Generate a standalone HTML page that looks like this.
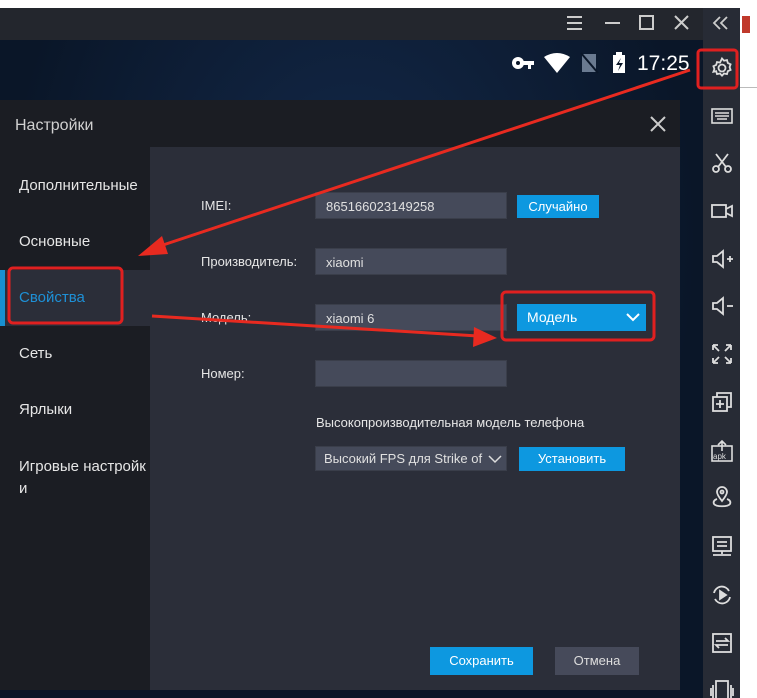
<!DOCTYPE html><html><head><meta charset="utf-8"><style>
*{margin:0;padding:0;box-sizing:border-box}
html,body{width:757px;height:698px;overflow:hidden;background:#fff;font-family:"Liberation Sans","DejaVu Sans",sans-serif;position:relative}
.a{position:absolute}
.t{color:#e6e6e6;font-size:14px}
.in{position:absolute;background:#454a5a;border:1px solid #3a3e4a;color:#e0e0e0;font-size:13px;padding:6px 10px;height:27px}
.btn{position:absolute;background:#0d98e0;color:#fff;font-size:13px;text-align:center;line-height:26px;height:26px}
.ic{position:absolute;left:710px;width:24px;height:24px}
</style></head><body>
<div class="a" style="left:0;top:8px;width:740px;height:690px;background:#0d1a2e"></div>
<div class="a" style="left:0;top:8px;width:703px;height:32px;background:#23262d"></div>
<div class="a" style="left:0;top:40px;width:703px;height:658px;background:radial-gradient(ellipse at 50% 30%,#13294a,#0a1628 70%)"></div>
<div class="a" style="left:703px;top:8px;width:37px;height:690px;background:#272b35"></div>
<div class="a" style="left:740px;top:87px;width:17px;height:1px;background:#bbb"></div>
<div class="a" style="left:742px;top:16px;width:8px;height:17px;background:#c0392b"></div>
<svg class="a" style="left:560px;top:12px" width="140" height="24" fill="none" stroke="#ccc" stroke-width="2">
<path d="M7 5h15M7 11h15M7 17h15"/><path d="M45 11h15"/><rect x="80" y="4" width="13" height="13"/><path d="M115 4l13 13M128 4l-13 13"/></svg>
<svg class="a" style="left:711px;top:14px" width="20" height="20" fill="none" stroke="#ccc" stroke-width="1.8"><path d="M9 3L3 9l6 6M16 3l-6 6 6 6"/></svg>
<svg class="a" style="left:510px;top:50px" width="180" height="26">
<circle cx="8" cy="13" r="6" fill="#fff"/><circle cx="8" cy="13" r="2" fill="#0a1628"/><rect x="12" y="11" width="12" height="4" fill="#fff"/><rect x="18" y="11" width="3" height="8" fill="#fff"/>
<path d="M34 7 Q47 -1 60 7 L47 23 Z" fill="#fff"/>
<path d="M72 4 L86 4 L86 22 L72 22 Z" fill="#6a7a90"/><line x1="71" y1="3" x2="88" y2="23" stroke="#0a1628" stroke-width="2"/>
<rect x="103" y="5" width="12" height="18" fill="#fff"/><rect x="106" y="2" width="6" height="3" fill="#fff"/><path d="M111 8 L106 15 L110 15 L108 21 L113 13 L109 13Z" fill="#0a1628"/>
<text x="127" y="20" fill="#fff" font-size="21" font-family="Liberation Sans">17:25</text></svg>
<svg class="ic" style="top:56px" viewBox="0 0 24 24" fill="none" stroke="#ddd" stroke-width="1.8"><circle cx="12" cy="12" r="3.5"/><path d="M12 2.5l2 2.2 3-.6.8 2.9 2.8 1.3-1 2.8 1 2.8-2.8 1.3-.8 2.9-3-.6-2 2.2-2-2.2-3 .6-.8-2.9L3.4 15.8l1-2.8-1-2.8 2.8-1.3.8-2.9 3 .6z"/></svg>
<svg class="ic" style="top:104px" viewBox="0 0 24 24" fill="none" stroke="#ddd" stroke-width="1.6"><rect x="2" y="5" width="20" height="14"/><path d="M5 9h14M5 12h14M7 15h10"/></svg>
<svg class="ic" style="top:151px" viewBox="0 0 24 24" fill="none" stroke="#ddd" stroke-width="1.8"><circle cx="6" cy="18" r="3"/><circle cx="18" cy="18" r="3"/><path d="M8 16L18 3M16 16L6 3"/></svg>
<svg class="ic" style="top:199px" viewBox="0 0 24 24" fill="none" stroke="#ddd" stroke-width="1.8"><rect x="2" y="6" width="14" height="12"/><path d="M16 10l6-3v10l-6-3"/></svg>
<svg class="ic" style="top:247px" viewBox="0 0 24 24" fill="none" stroke="#ddd" stroke-width="1.8"><path d="M3 9h4l6-5v16l-6-5H3z"/><path d="M17 12h6M20 9v6"/></svg>
<svg class="ic" style="top:294px" viewBox="0 0 24 24" fill="none" stroke="#ddd" stroke-width="1.8"><path d="M3 9h4l6-5v16l-6-5H3z"/><path d="M17 12h6"/></svg>
<svg class="ic" style="top:342px" viewBox="0 0 24 24" fill="none" stroke="#ddd" stroke-width="1.8"><path d="M3 3l6 6M3 3v5M3 3h5M21 3l-6 6M21 3v5M21 3h-5M3 21l6-6M3 21v-5M3 21h5M21 21l-6-6M21 21v-5M21 21h-5"/></svg>
<svg class="ic" style="top:390px" viewBox="0 0 24 24" fill="none" stroke="#ddd" stroke-width="1.8"><rect x="3" y="7" width="14" height="14"/><path d="M7 7V3h14v14h-4M10 10v8M6 14h8"/></svg>
<svg class="ic" style="top:439px" viewBox="0 0 24 24" fill="none" stroke="#ddd" stroke-width="1.6"><rect x="2" y="7" width="20" height="15"/><path d="M12 12V2M8 6l4-4 4 4"/><text x="3" y="20" font-size="8" fill="#ddd" stroke="none">apk</text></svg>
<svg class="ic" style="top:485px" viewBox="0 0 24 24" fill="none" stroke="#ddd" stroke-width="1.8"><path d="M12 16c-4-5-5-7-5-9a5 5 0 0110 0c0 2-1 4-5 9z"/><circle cx="12" cy="7" r="1.5"/><path d="M7 14c-3 1-4 3-3 5 2 3 14 3 16 0 1-2 0-4-3-5"/></svg>
<svg class="ic" style="top:534px" viewBox="0 0 24 24" fill="none" stroke="#ddd" stroke-width="1.8"><rect x="3" y="3" width="18" height="14"/><path d="M7 8h10M7 12h10M12 17v3M3 21h18"/></svg>
<svg class="ic" style="top:583px" viewBox="0 0 24 24" fill="none" stroke="#ddd" stroke-width="1.8"><path d="M4 10a8 8 0 0115-2M20 14a8 8 0 01-15 2"/><path d="M10 8l6 4-6 4z" fill="#ddd"/></svg>
<svg class="ic" style="top:631px" viewBox="0 0 24 24" fill="none" stroke="#ddd" stroke-width="1.8"><rect x="3" y="3" width="18" height="18"/><path d="M6 10h12l-3-3M18 14H6l3 3"/></svg>
<svg class="ic" style="top:679px" viewBox="0 0 24 24" fill="none" stroke="#ddd" stroke-width="1.8"><rect x="6" y="2" width="12" height="22"/><path d="M3 6v14M1 9v8M21 6v14M23 9v8"/></svg>
<div class="a" style="left:0;top:100px;width:680px;height:590px;background:#1b1d23"></div>
<div class="a t" style="left:15px;top:117px;font-size:16px;color:#d0d0d0">Настройки</div>
<svg class="a" style="left:650px;top:116px" width="16" height="16" stroke="#ccc" stroke-width="2"><path d="M1 1l14 14M15 1L1 15"/></svg>
<div class="a" style="left:150px;top:147px;width:530px;height:543px;background:#2b2e39"></div>
<div class="a" style="left:0;top:270px;width:150px;height:56px;background:#2b2e39"></div>
<div class="a" style="left:0;top:270px;width:5px;height:56px;background:#1890d0"></div>
<div class="a t" style="left:19px;top:177px;font-size:15px">Дополнительные</div>
<div class="a t" style="left:19px;top:233px;font-size:15px">Основные</div>
<div class="a" style="left:19px;top:289px;font-size:15px;color:#1e90d6">Свойства</div>
<div class="a t" style="left:19px;top:345px;font-size:15px">Сеть</div>
<div class="a t" style="left:19px;top:401px;font-size:15px">Ярлыки</div>
<div class="a t" style="left:19px;top:456px;font-size:15px;line-height:22px">Игровые настройк<br>и</div>
<div class="a t" style="left:201px;top:198px;font-size:13px">IMEI:</div>
<div class="in" style="left:315px;top:192px;width:192px">865166023149258</div>
<div class="btn" style="left:517px;top:195px;width:82px;height:23px;line-height:23px">Случайно</div>
<div class="a t" style="left:201px;top:254px;font-size:13px">Производитель:</div>
<div class="in" style="left:315px;top:248px;width:192px">xiaomi</div>
<div class="a t" style="left:201px;top:310px;font-size:13px">Модель:</div>
<div class="in" style="left:315px;top:304px;width:192px">xiaomi 6</div>
<div class="btn" style="left:517px;top:304px;width:129px;height:27px;line-height:27px;text-align:left;padding-left:10px;font-size:14px">Модель<svg style="position:absolute;right:6px;top:8px" width="14" height="10" fill="none" stroke="#fff" stroke-width="2"><path d="M1 2l6 6 6-6"/></svg></div>
<div class="a t" style="left:201px;top:366px;font-size:13px">Номер:</div>
<div class="in" style="left:315px;top:360px;width:192px"></div>
<div class="a t" style="left:316px;top:415px;font-size:13px">Высокопроизводительная модель телефона</div>
<div class="in" style="left:315px;top:446px;width:192px;height:25px;padding:4px 8px;white-space:nowrap;overflow:hidden">Высокий FPS для Strike of<svg style="position:absolute;right:4px;top:7px" width="14" height="10" fill="none" stroke="#ddd" stroke-width="1.5"><path d="M1 2l6 6 6-6"/></svg></div>
<div class="btn" style="left:519px;top:447px;width:106px;height:24px;line-height:24px">Установить</div>
<div class="btn" style="left:430px;top:647px;width:103px;height:28px;line-height:28px">Сохранить</div>
<div class="btn" style="left:555px;top:647px;width:84px;height:28px;line-height:28px;background:#464a5a;color:#ddd">Отмена</div>
<svg class="a" style="left:0;top:0" width="757" height="698" fill="none">
<rect x="698" y="50" width="39" height="38" rx="3" stroke="#e02020" stroke-width="3"/>
<rect x="9" y="268" width="113" height="55" rx="4" stroke="#e02020" stroke-width="3"/>
<rect x="502" y="292" width="152" height="48" rx="4" stroke="#e02020" stroke-width="3"/>
<line x1="690" y1="70" x2="160" y2="246" stroke="#e82a20" stroke-width="3"/>
<path d="M138 256 L162 236 L168 254 Z" fill="#e82a20"/>
<line x1="152" y1="316" x2="478" y2="336" stroke="#e82a20" stroke-width="3"/>
<path d="M497 338 L474 327 L473 347 Z" fill="#e82a20"/>
</svg>
</body></html>
